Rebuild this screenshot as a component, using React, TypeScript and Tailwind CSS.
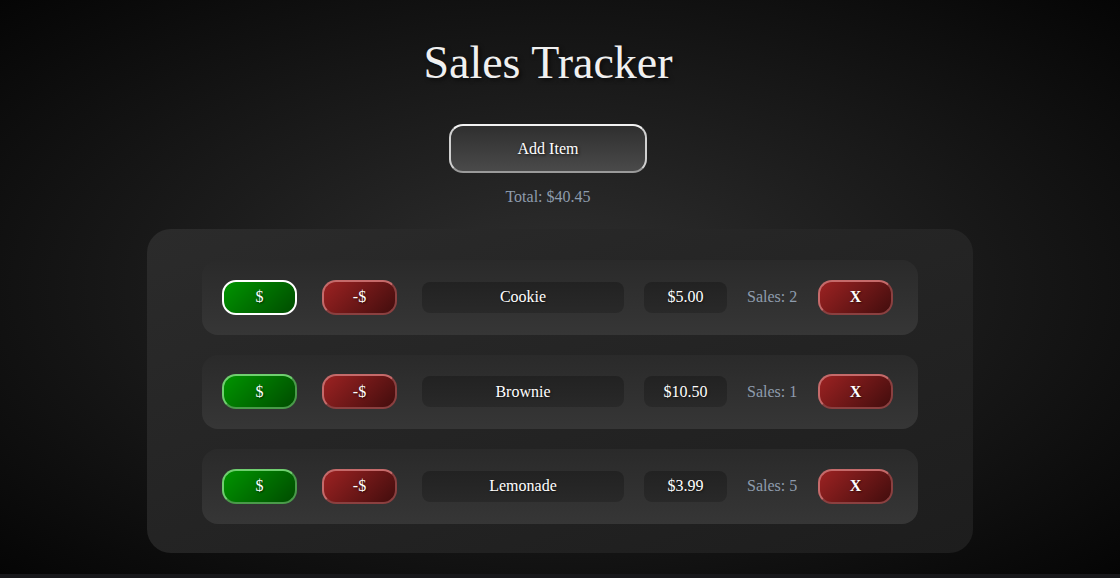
import React from "react";

const items = [
  { name: "Cookie", price: "$5.00", sales: 2, focused: true },
  { name: "Brownie", price: "$10.50", sales: 1, focused: false },
  { name: "Lemonade", price: "$3.99", sales: 5, focused: false },
];

export default function App() {
  return (
    <div className="min-h-screen bg-[#18181b]" style={{ fontFamily: '"Liberation Serif", "Times New Roman", serif' }}>
      <div className="h-[574px] flex flex-col items-center bg-[radial-gradient(ellipse_at_50%_50%,#303030_0%,#1c1c1c_45%,#050505_100%)]">
        <h1 className="mt-[40px] mr-[24px] text-[46px] leading-none text-[#f0f0f0] [text-shadow:2px_2px_4px_rgba(0,0,0,0.6)]">
          Sales Tracker
        </h1>
        <button className="mt-[38px] mr-[24px] w-[198px] h-[49px] rounded-[14px] border-2 border-t-[#f2f2f2] border-x-[#d0d0d0] border-b-[#9a9a9a] bg-[linear-gradient(180deg,#2f2f2f,#4a4a4a)] text-white text-base [text-shadow:1px_1px_3px_rgba(0,0,0,0.8)]">
          Add Item
        </button>
        <div className="mt-[12px] mr-[24px] text-base leading-6 text-[#8e9cad]">Total: $40.45</div>
        <div className="mt-[20px] w-[826px] rounded-[24px] pt-[31px] pb-[29px] flex flex-col items-center gap-[20px] bg-[linear-gradient(160deg,#2b2b2b,#1d1d1d)]">
          {items.map((it) => (
            <div
              key={it.name}
              className="w-[716px] h-[74.5px] rounded-[16px] flex items-center pl-[20px] bg-[linear-gradient(180deg,#2a2a2a,#363636)]"
            >
              <button
                className={
                  it.focused
                    ? "w-[75px] h-[35px] rounded-[14px] border-2 border-white bg-[linear-gradient(135deg,#009400,#004c00)] text-white text-base [text-shadow:1px_1px_2px_rgba(0,0,0,0.6)]"
                    : "w-[75px] h-[35px] rounded-[14px] border-2 border-t-[#6fcf6f] border-l-[#6fcf6f] border-r-[#4a9a4a] border-b-[#4a9a4a] bg-[linear-gradient(135deg,#009400,#004c00)] text-white text-base [text-shadow:1px_1px_2px_rgba(0,0,0,0.6)]"
                }
              >
                $
              </button>
              <button className="ml-[25px] w-[75px] h-[35px] rounded-[14px] border-2 border-t-[#c56a6a] border-l-[#c56a6a] border-r-[#8a4040] border-b-[#8a4040] bg-[linear-gradient(135deg,#9c2222,#420d0d)] text-white text-base [text-shadow:1px_1px_2px_rgba(0,0,0,0.6)]">
                -$
              </button>
              <div className="ml-[25px] w-[202px] h-[31px] rounded-[8px] bg-[linear-gradient(180deg,#222222,#292929)] flex items-center justify-center text-white text-base [text-shadow:1px_1px_2px_rgba(0,0,0,0.5)]">
                {it.name}
              </div>
              <div className="ml-[20px] w-[83px] h-[31px] rounded-[8px] bg-[linear-gradient(180deg,#222222,#292929)] flex items-center justify-center text-white text-base [text-shadow:1px_1px_2px_rgba(0,0,0,0.5)]">
                {it.price}
              </div>
              <div className="ml-[20px] w-[51px] text-base text-[#8e9cad] whitespace-nowrap">Sales: {it.sales}</div>
              <button className="ml-[20px] w-[75px] h-[35px] rounded-[14px] border-2 border-t-[#c56a6a] border-l-[#c56a6a] border-r-[#8a4040] border-b-[#8a4040] bg-[linear-gradient(135deg,#9c2222,#420d0d)] text-white text-base font-bold [text-shadow:1px_1px_2px_rgba(0,0,0,0.6)]">
                X
              </button>
            </div>
          ))}
        </div>
      </div>
    </div>
  );
}
